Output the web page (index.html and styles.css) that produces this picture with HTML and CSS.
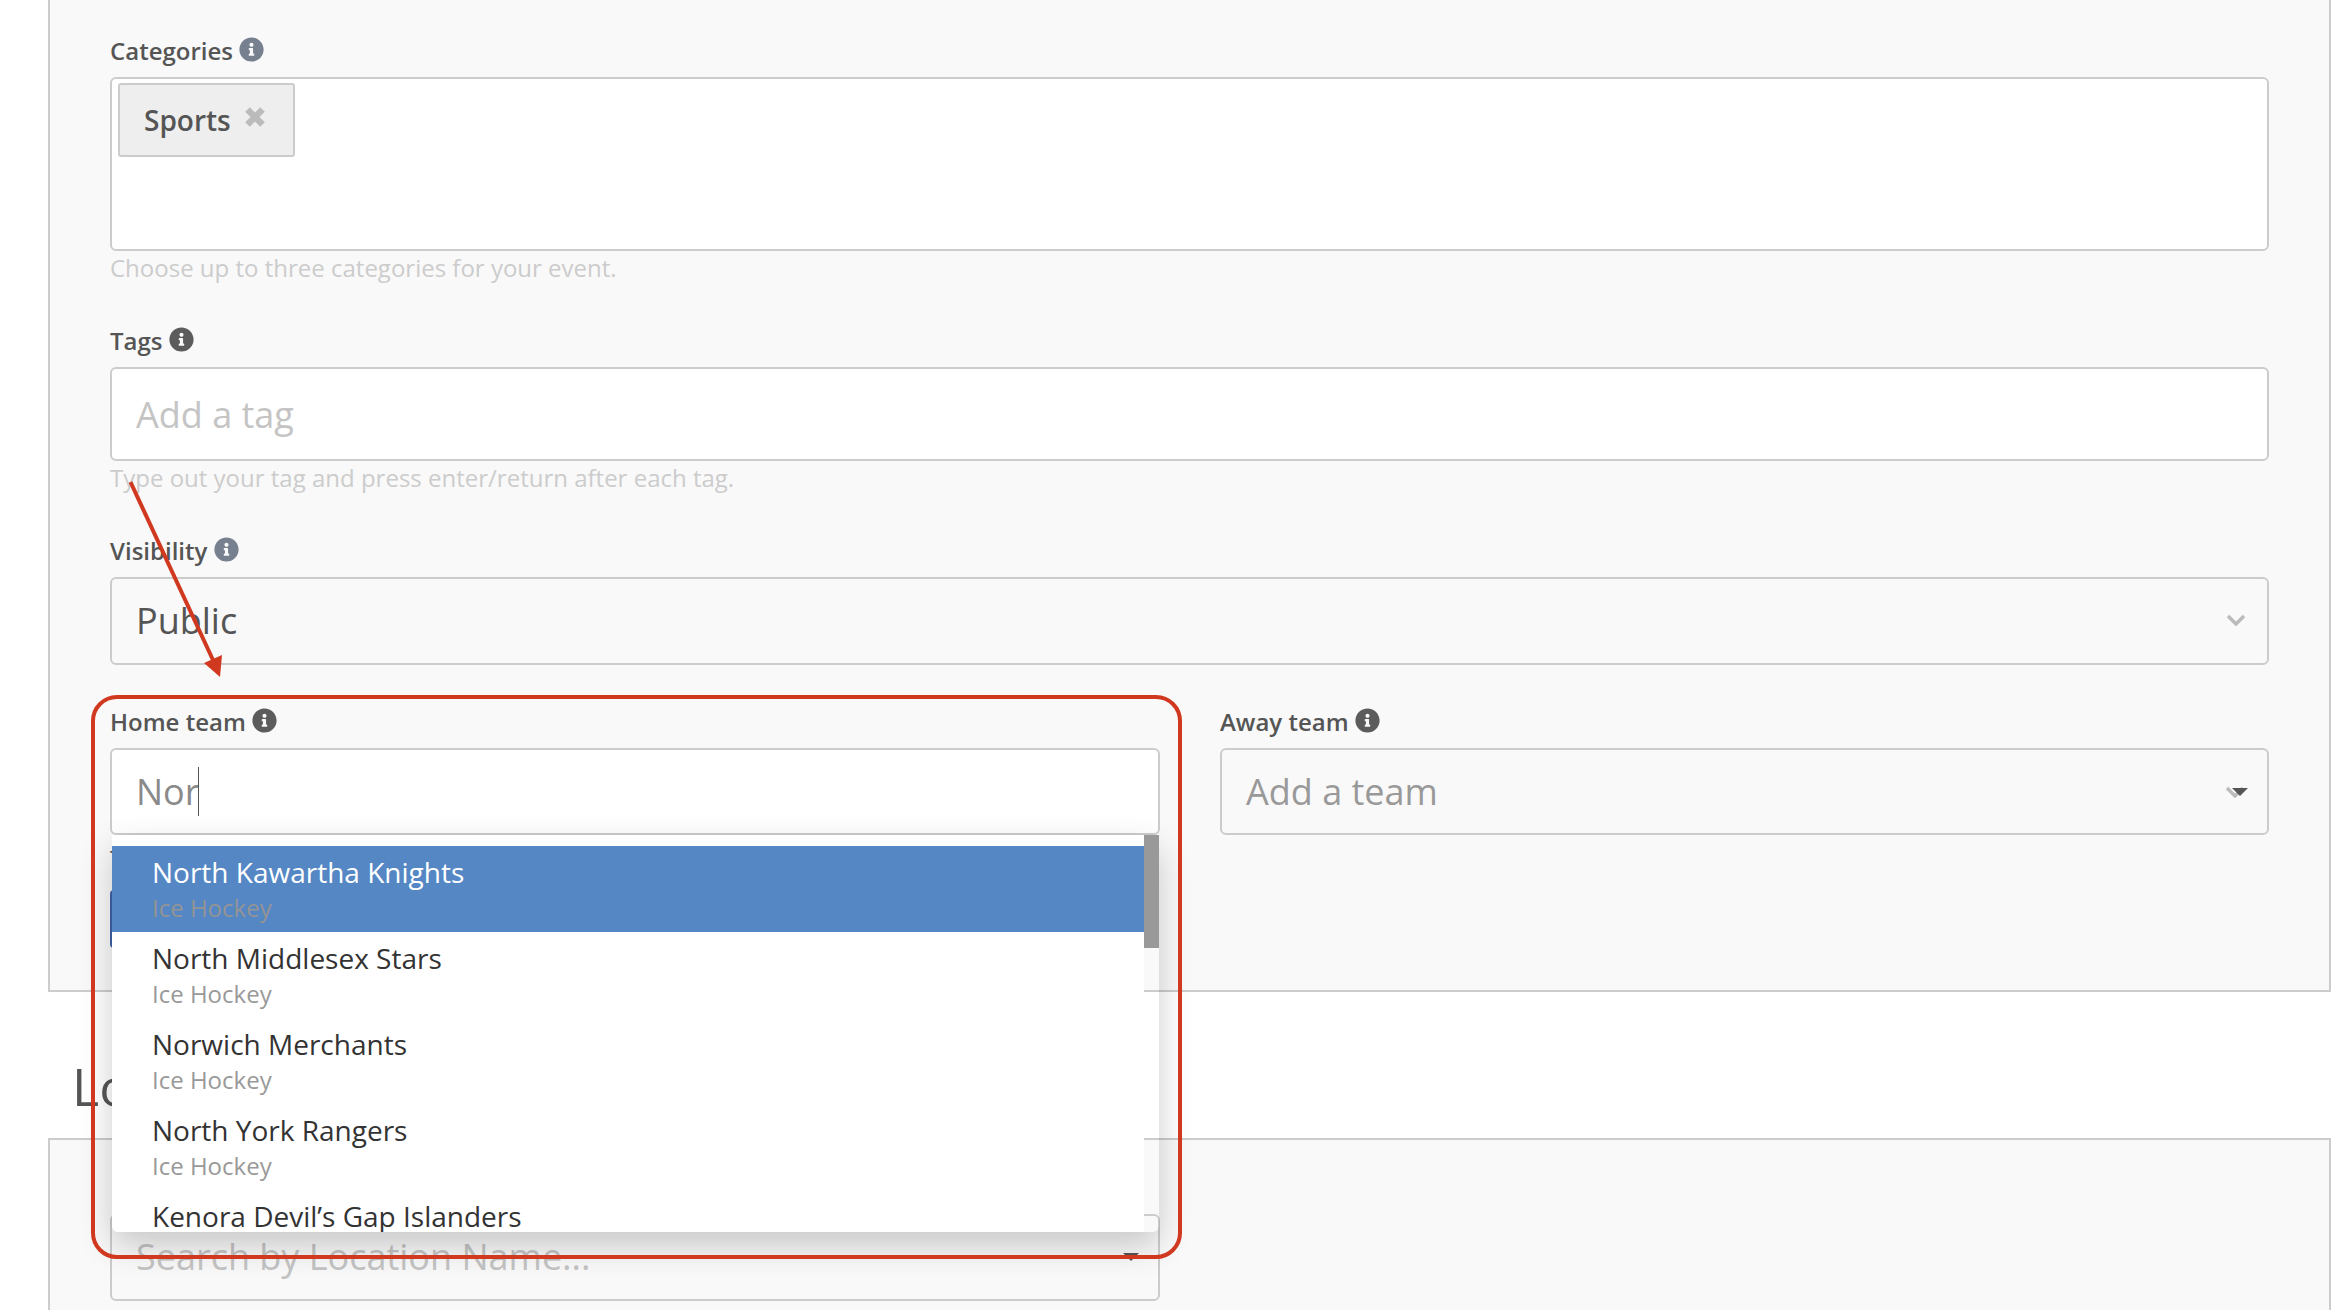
FILE: index.html
```html
<!DOCTYPE html>
<html lang="en">
<head>
<meta charset="utf-8">
<title>Event form</title>
<link rel="stylesheet" href="styles.css">
</head>
<body>
<svg width="0" height="0" class="defs">
  <symbol id="info" viewBox="0 0 512 512"><path d="M256 8C119.043 8 8 119.083 8 256c0 136.997 111.043 248 248 248s248-111.003 248-248C504 119.083 392.957 8 256 8zm0 110c23.196 0 42 18.804 42 42s-18.804 42-42 42-42-18.804-42-42 18.804-42 42-42zm56 254c0 6.627-5.373 12-12 12h-88c-6.627 0-12-5.373-12-12v-24c0-6.627 5.373-12 12-12h12v-64h-12c-6.627 0-12-5.373-12-12v-24c0-6.627 5.373-12 12-12h64c6.627 0 12 5.373 12 12v100h12c6.627 0 12 5.373 12 12v24z"/></symbol>
</svg>
<main class="page">
  <section class="panel panel-details">
    <div class="field field-categories">
      <div class="label">Categories <svg class="info info-slate"><use href="#info"/></svg></div>
      <div class="box box-categories">
        <span class="chip">Sports<svg class="chip-x" viewBox="0 0 20 20"><path d="M2.500 2.500l15 15M17.500 2.500l-15 15"/></svg></span>
      </div>
      <div class="hint">Choose up to three categories for your event.</div>
    </div>
    <div class="field field-tags">
      <div class="label">Tags <svg class="info"><use href="#info"/></svg></div>
      <div class="box box-input box-white box-tags"><span class="placeholder-light">Add a tag</span></div>
      <div class="hint">Type out your tag and press enter/return after each tag.</div>
    </div>
    <div class="field field-visibility">
      <div class="label">Visibility <svg class="info info-slate"><use href="#info"/></svg></div>
      <div class="box box-input box-select box-tall">
        <span class="value">Public</span>
        <svg class="chevron" viewBox="0 0 20 12"><path d="M2 2l8 8 8-8"/></svg>
      </div>
    </div>
    <div class="team-row">
      <div class="field team-field">
        <div class="label">Home team <svg class="info"><use href="#info"/></svg></div>
        <div class="box box-input box-white"><span class="typed">Nor</span><span class="caret"></span></div>
        <div class="hidden-hint">T</div>
        <div class="hidden-button"></div>
        <div class="dropdown">
          <ul class="options">
            <li class="option option-active"><div class="option-name">North Kawartha Knights</div><div class="option-sub">Ice Hockey</div></li>
            <li class="option"><div class="option-name">North Middlesex Stars</div><div class="option-sub">Ice Hockey</div></li>
            <li class="option"><div class="option-name">Norwich Merchants</div><div class="option-sub">Ice Hockey</div></li>
            <li class="option"><div class="option-name">North York Rangers</div><div class="option-sub">Ice Hockey</div></li>
            <li class="option"><div class="option-name">Kenora Devil’s Gap Islanders</div><div class="option-sub">Ice Hockey</div></li>
          </ul>
          <div class="scrollbar"><div class="thumb"></div></div>
        </div>
      </div>
      <div class="field">
        <div class="label">Away team <svg class="info"><use href="#info"/></svg></div>
        <div class="box box-input box-select">
          <span class="placeholder">Add a team</span>
          <span class="arrow-pair">
            <svg class="chevron" viewBox="0 0 20 12"><path d="M2 2l8 8 8-8"/></svg>
            <span class="caret-down"></span>
          </span>
        </div>
      </div>
    </div>
  </section>
  <h2 class="section-title">Location</h2>
  <section class="panel panel-location">
    <div class="box box-input box-select box-location">
      <span class="placeholder-light">Search by Location Name...</span>
      <span class="caret-down caret-location"></span>
    </div>
  </section>
</main>
<svg class="annotation" width="2342" height="1310" viewBox="0 0 2342 1310">
  <rect x="93" y="697" width="1087" height="560" rx="24" ry="24"/>
  <line x1="130.500" y1="482" x2="213" y2="660"/>
  <polygon points="204,663 222,655 220,677"/>
</svg>
</body>
</html>
```
FILE: styles.css
```css
* { box-sizing: border-box; }
html, body { margin: 0; padding: 0; }
body {
  width: 2342px;
  height: 1310px;
  overflow: hidden;
  background: #fff;
  font-family: "Open Sans", "Noto Sans", sans-serif;
  color: #555;
  position: relative;
}
.defs { position: absolute; }
.page { width: 2342px; }

.panel {
  margin-left: 48px;
  width: 2283px;
  background: #f9f9f9;
  border: 2px solid #ccc;
  padding-left: 60px;
  padding-right: 60px;
}
.panel-details {
  border-top: 0;
  padding-top: 33px;
  height: 992px;
}
.panel-location {
  border-bottom: 0;
  padding-top: 74px;
  height: 173px;
}
.section-title {
  margin: 59px 0 17px 72px;
  font-size: 52px;
  line-height: 70px;
  font-weight: 400;
  color: #555;
}

.field-categories, .field-tags { margin-bottom: 37px; }
.field-visibility { margin-bottom: 39px; }

.label {
  display: flex;
  align-items: center;
  height: 34px;
  margin-bottom: 10px;
  font-size: 24px;
  font-weight: 600;
  color: #555;
  white-space: pre;
}
.info { width: 25px; height: 25px; margin-top: -2px; fill: #5c5c5c; flex: none; }
.info-slate { fill: #76808f; }

.box {
  border: 2px solid #ccc;
  border-radius: 6px;
  width: 100%;
}
.box-categories {
  height: 174px;
  background: #fff;
  padding: 4px 0 0 6px;
}
.box-input {
  height: 87px;
  padding: 0 24px;
  display: flex;
  align-items: center;
  font-size: 36px;
}
.box-white { background: #fff; }
.box-tags { height: 94px; }
.box-tall { height: 88px; padding-bottom: 2px; }
.box-select { justify-content: space-between; padding-right: 21px; }
.box-location { width: 1050px; padding-right: 19px; padding-bottom: 2px; }

.chip {
  display: inline-flex;
  align-items: center;
  width: 177px;
  height: 74px;
  padding-left: 24px;
  background: #eee;
  border: 2px solid #ccc;
  border-radius: 3px;
  font-size: 28px;
  font-weight: 600;
  color: #555;
}
.chip-x {
  width: 20px;
  height: 20px;
  margin: -7px 0 0 14px;
  fill: none;
  stroke: #bbb;
  stroke-width: 6.500px;
}

.hint {
  height: 36px;
  margin-top: -1px;
  line-height: 36px;
  font-size: 24px;
  color: #ccc;
}
.value { color: #555; }
.placeholder { color: #999; }
.placeholder-light { color: #c4c4c4; }
.typed { color: #8a8a8a; }
.caret {
  width: 1px;
  height: 49px;
  margin-left: -1px;
  background: #555;
}

.chevron {
  width: 20px;
  height: 12px;
  fill: none;
  stroke: #bbb;
  stroke-width: 3.500px;
  flex: none;
}
.arrow-pair {
  display: inline-flex;
  align-items: center;
}
.caret-down {
  width: 0;
  height: 0;
  border-left: 8px solid transparent;
  border-right: 8px solid transparent;
  border-top: 8px solid #555;
}
.arrow-pair .caret-down { margin-left: -13px; margin-right: -2px; }

.team-row {
  display: grid;
  grid-template-columns: 1050px 1049px;
  column-gap: 60px;
}
.team-field { position: relative; }
.hidden-hint {
  height: 36px;
  margin-top: 6px;
  font-size: 24px;
  line-height: 36px;
  color: #555;
}
.hidden-button {
  width: 200px;
  height: 58px;
  margin-top: 13px;
  background: #3f62a6;
  border-radius: 4px;
}

.dropdown {
  position: absolute;
  left: 2px;
  top: 131px;
  width: 1047px;
  height: 397px;
  display: flex;
  border-radius: 0 0 6px 6px;
  box-shadow: 0 14px 34px rgba(0, 0, 0, 0.2);
}
.options {
  flex: 1;
  margin: 0;
  padding: 11px 0 0;
  list-style: none;
  background: #fff;
  overflow: hidden;
  border-radius: 0 0 0 6px;
}
.option {
  height: 86px;
  padding: 9px 0 0 40px;
}
.option-active { background: #5487c4; }
.option-name {
  height: 36px;
  line-height: 34px;
  font-size: 28px;
  color: #333;
}
.option-sub {
  height: 34px;
  line-height: 34px;
  font-size: 24px;
  color: #999;
}
.option-active .option-name { color: #fff; }
.option-active .option-sub { color: #949494; }
.scrollbar { width: 15px; flex: none; }
.thumb { height: 113px; background: #999; }

.annotation {
  position: absolute;
  left: 0;
  top: 0;
  pointer-events: none;
}
.annotation rect {
  fill: none;
  stroke: #d0391f;
  stroke-width: 4;
}
.annotation line {
  stroke: #d0391f;
  stroke-width: 4;
}
.annotation polygon { fill: #d0391f; }
```
